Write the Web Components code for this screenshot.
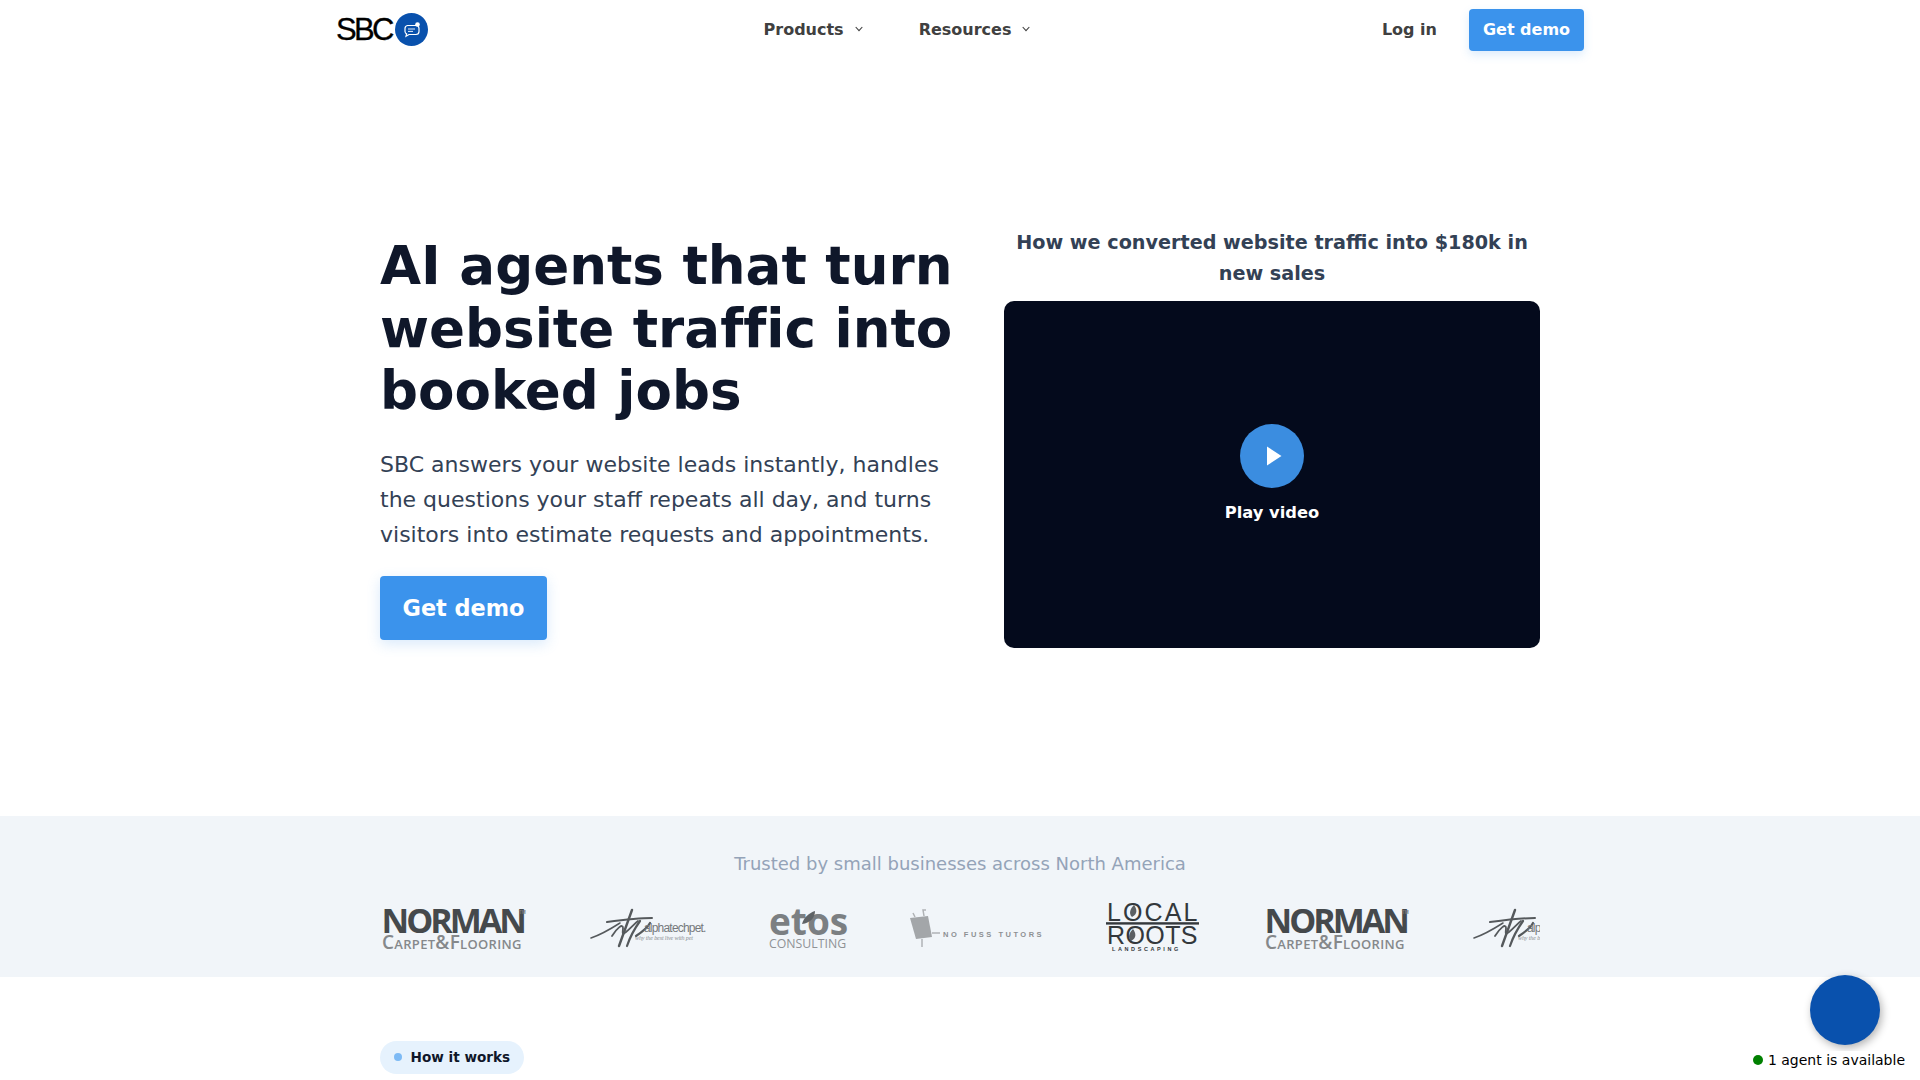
<!DOCTYPE html>
<html lang="en">
<head>
<meta charset="utf-8">
<title>SBC</title>
<style>
html, body { margin: 0; background: #fff; }
body { font-family: "DejaVu Sans", sans-serif; color: #0f172a; height: 1080px; overflow: hidden; }
</style>
</head>
<body>
<site-header></site-header>
<hero-section></hero-section>
<logo-band></logo-band>
<how-section></how-section>
<chat-widget></chat-widget>

<script>
class SiteHeader extends HTMLElement {
    constructor() {
        super();
        this.attachShadow({ mode: "open" }).innerHTML = `
<style>
:host { display: block; }
.bar { width: 1248px; height: 60px; margin: 0 auto; display: grid; grid-template-columns: 1fr auto 1fr; align-items: center; }
.logo { display: flex; align-items: center; gap: 3px; font: 400 31px "Liberation Sans", sans-serif; letter-spacing: -2.7px; -webkit-text-stroke: .3px #000; color: #000; text-decoration: none; margin-top: -1px; }
.links { display: flex; gap: 56px; margin-right: 126px; margin-top: -2px; }
a.link { display: flex; align-items: center; gap: 11px; font-size: 16px; font-weight: 700; color: #404040; text-decoration: none; }
.right { display: flex; justify-content: flex-end; align-items: center; gap: 32px; }
.right a.link { margin-top: -2px; }
.demo { width: 115px; height: 42px; padding-bottom: 2px; box-sizing: border-box; display: flex; align-items: center; justify-content: center; background: #3b93ec; color: #fff; border-radius: 4px; font-size: 16px; font-weight: 700; text-decoration: none; box-shadow: 0 4px 10px rgba(59,147,236,.18); }
</style>
<div class="bar">
  <a class="logo">SBC
    <svg width="33" height="33" viewBox="0 0 33 33">
      <circle cx="16.5" cy="16.5" r="16.5" fill="#0951ad"/>
      <path d="M12.5 12.5h8.5a3 3 0 0 1 3 3v3a3 3 0 0 1-3 3h-7l-3 1.8.6-2.4a3 3 0 0 1-1.6-2.4v-3a3 3 0 0 1 2.5-3z" fill="none" stroke="#fff" stroke-width="1.2"/>
      <path d="M13 16h7M13 18.4h5" stroke="#fff" stroke-width=".9"/>
      <circle cx="22.5" cy="11.5" r="2.3" fill="#fff"/>
    </svg>
  </a>
  <nav class="links">
    <a class="link">Products <svg width="8" height="6" viewBox="0 0 8 6"><path d="M.7 1 4 4.6 7.3 1" fill="none" stroke="#404040" stroke-width="1.1"/></svg></a>
    <a class="link">Resources <svg width="8" height="6" viewBox="0 0 8 6"><path d="M.7 1 4 4.6 7.3 1" fill="none" stroke="#404040" stroke-width="1.1"/></svg></a>
  </nav>
  <div class="right"><a class="link">Log in</a><a class="demo">Get demo</a></div>
</div>`;
    }
}

class HeroSection extends HTMLElement {
    constructor() {
        super();
        this.attachShadow({ mode: "open" }).innerHTML = `
<style>
:host { display: block; }
.wrap { width: 1160px; height: 756px; margin: 0 auto; display: grid; grid-template-columns: 1fr 536px; column-gap: 48px; align-items: center; }
h1 { margin: -1px 0 24px; font-size: 53.1px; line-height: 62.4px; font-weight: 700; font-variant-ligatures: none; color: #0f172a; }
p { margin: 0 0 24px; font-size: 22px; line-height: 35px; color: #334155; }
.cta { display: inline-flex; align-items: center; height: 64px; padding: 0 22.5px; background: #3b93ec; color: #fff; border-radius: 4px; font-size: 22.4px; font-weight: 700; box-shadow: 0 4px 14px rgba(59,147,236,.2); }
.side { margin-bottom: 2px; }
h2 { margin: 0 0 12px; font-size: 19.2px; line-height: 31px; font-weight: 700; color: #334155; text-align: center; }
.video { height: 347px; box-sizing: border-box; padding-bottom: 2px; border-radius: 10px; background: #040a1c; display: flex; flex-direction: column; align-items: center; justify-content: center; gap: 15px; color: #fff; font-size: 16.3px; font-weight: 700; }
.play { width: 64px; height: 64px; border-radius: 50%; background: #3b8de0; display: flex; align-items: center; justify-content: center; }
.play svg { margin-left: 3px; }
</style>
<div class="wrap">
  <div>
    <h1>AI agents that turn website traffic into booked jobs</h1>
    <p>SBC answers your website leads instantly, handles the questions your staff repeats all day, and turns visitors into estimate requests and appointments.</p>
    <a class="cta">Get demo</a>
  </div>
  <div class="side">
    <h2>How we converted website traffic into $180k in new sales</h2>
    <div class="video">
      <span class="play"><svg width="16" height="20" viewBox="0 0 16 20"><path d="M1 0.5 15.5 10 1 19.5z" fill="#fff"/></svg></span>
      <span>Play video</span>
    </div>
  </div>
</div>`;
    }
}

class LogoBand extends HTMLElement {
    constructor() {
        super();
        this.attachShadow({ mode: "open" }).innerHTML = `
<style>
:host { display: block; background: #f1f5f9; height: 161px; }
.wrap { width: 1160px; margin: 0 auto; padding-top: 37px; }
.title { text-align: center; font-size: 18px; line-height: 22px; color: #94a3b8; }
.strip { display: flex; gap: 64px; overflow: hidden; margin-top: 13px; padding: 12px 0 8px; align-items: flex-start; }
.strip ::slotted(*) { flex: none; }
</style>
<div class="wrap">
  <div class="title">Trusted by small businesses across North America</div>
  <div class="strip"><slot></slot></div>
</div>`;
        this.innerHTML = `
<brand-norman></brand-norman><brand-atp></brand-atp><brand-etos></brand-etos><brand-fuss></brand-fuss><brand-roots></brand-roots><brand-norman></brand-norman><brand-atp></brand-atp>`;
    }
}

// the logos are plain svg with real <text>, no outlines for letters
class BrandNorman extends HTMLElement {
    constructor() {
        super();
        this.attachShadow({ mode: "open" }).innerHTML = `
<style>:host { display: block; width: 146px; height: 56px; } svg { display: block; overflow: visible; }</style>
<svg width="146" height="56" viewBox="0 0 146 56" font-family="Open Sans, sans-serif">
  <text x="1.5" y="33" font-size="34" font-weight="700" letter-spacing="-3" fill="#45494c">NORMAN</text>
  <text x="139" y="14" font-size="4.5" font-weight="700" fill="#777">TM</text>
  <text x="2" y="49" font-size="19" font-weight="600" letter-spacing=".3" fill="#85888b" style="font-variant: small-caps">Carpet&amp;Flooring</text>
</svg>`;
    }
}

class BrandAtp extends HTMLElement {
    constructor() {
        super();
        this.attachShadow({ mode: "open" }).innerHTML = `
<style>:host { display: block; width: 115px; height: 56px; } svg { display: block; overflow: visible; }</style>
<svg width="115" height="56" viewBox="0 0 115 56">
  <g fill="none" stroke="#55595c" stroke-linecap="round">
    <path d="M1 38C10 35 19 30 30 23" stroke-width="1.5"/>
    <path d="M17 22C32 20 48 18 62 18" stroke-width="2"/>
    <path d="M42 10 29 46" stroke-width="2.4"/>
    <path d="M22 36C27 28 33 23 33 28S31 36 36 32 44 24 48 21" stroke-width="1.8"/>
    <path d="M37 46C40 37 45 28 50 21M46 36C52 32 58 27 60 23" stroke-width="2.2"/>
  </g>
  <text x="54" y="32" font-family="Liberation Sans, sans-serif" font-size="12" letter-spacing="-.8" fill="#75797c">alphatechpet.</text>
  <text x="45" y="40" font-family="Liberation Serif, serif" font-style="italic" font-size="6" letter-spacing="-.1" fill="#8a8d90">why the best live with pet</text>
</svg>`;
    }
}

class BrandEtos extends HTMLElement {
    constructor() {
        super();
        this.attachShadow({ mode: "open" }).innerHTML = `
<style>:host { display: block; width: 77px; height: 56px; } svg { display: block; overflow: visible; }</style>
<svg width="77" height="56" viewBox="0 0 77 56" font-family="Open Sans, sans-serif">
  <text x="0" y="35" font-size="37" font-weight="700" fill="#7b7f82">etos</text>
  <path d="M33 24C35 17 40 13 46 11 46 18 41 23 33 24z" fill="#5f6366"/>
  <text x="0" y="48" font-size="12.3" fill="#8f9295">CONSULTING</text>
</svg>`;
    }
}

class BrandFuss extends HTMLElement {
    constructor() {
        super();
        this.attachShadow({ mode: "open" }).innerHTML = `
<style>:host { display: block; width: 133px; height: 56px; } svg { display: block; overflow: visible; }</style>
<svg width="133" height="56" viewBox="0 0 133 56">
  <path d="M0 18 18 16 22 37 6 39z" fill="#a3a6a9"/>
  <path d="M5 17 3 13M14 16 13 10 16 10M12 39 12 47M22 33H30" stroke="#b0b3b6" stroke-width="1.5" fill="none"/>
  <text x="33" y="37" font-family="Liberation Sans, sans-serif" font-size="7.5" font-weight="700" letter-spacing="2.5" fill="#8d9093">NO FUSS TUTORS</text>
</svg>`;
    }
}

class BrandRoots extends HTMLElement {
    constructor() {
        super();
        this.attachShadow({ mode: "open" }).innerHTML = `
<style>:host { display: block; width: 92px; height: 56px; } svg { display: block; overflow: visible; }</style>
<svg width="94" height="56" viewBox="0 0 94 56" font-family="Liberation Sans, sans-serif">
  <text x="0" y="21" font-size="25" letter-spacing="2.1" fill="#33383c">LOCAL</text>
  <rect x="-1" y="22.2" width="93" height="2.4" fill="#33383c"/>
  <text x="0" y="44" font-size="25" letter-spacing=".4" fill="#33383c">ROOTS</text>
  <path d="M25 17C21 13 24 8 27 5 30 9 31 14 25 17zM24 41C20 37 23 32 26 29 29 33 30 38 24 41z" fill="#5b6064"/>
  <text x="5" y="51" font-size="5.5" font-weight="700" letter-spacing="2.6" fill="#33383c">LANDSCAPING</text>
</svg>`;
    }
}

class HowSection extends HTMLElement {
    constructor() {
        super();
        this.attachShadow({ mode: "open" }).innerHTML = `
<style>
:host { display: block; width: 1160px; margin: 64px auto 0; }
.pill { display: inline-flex; align-items: center; gap: 9px; height: 33px; padding: 0 13.5px 2px 13.5px; box-sizing: border-box; background: #e6f2fd; border-radius: 17px; font-size: 13.6px; font-weight: 700; color: #0f172a; }
.dot { width: 8px; height: 8px; border-radius: 50%; background: #7dbaf5; }
</style>
<span class="pill"><span class="dot"></span>How it works</span>`;
    }
}

class ChatWidget extends HTMLElement {
    constructor() {
        super();
        this.attachShadow({ mode: "open" }).innerHTML = `
<style>
:host { position: fixed; right: 15px; bottom: 11px; display: flex; flex-direction: column; align-items: flex-end; gap: 6px; }
.bubble { width: 70px; height: 70px; margin-right: 25px; border-radius: 50%; background: #0951ad; box-shadow: 2px 3px 8px rgba(0,0,0,.3); }
.status { display: flex; align-items: center; gap: 5px; font-size: 14px; line-height: 18px; color: #000; background: #fff; }
.on { width: 10px; height: 10px; border-radius: 50%; background: #008000; }
</style>
<div class="bubble"></div>
<div class="status"><span class="on"></span>1 agent is available</div>`;
    }
}

customElements.define("site-header", SiteHeader);
customElements.define("hero-section", HeroSection);
customElements.define("logo-band", LogoBand);
customElements.define("brand-norman", BrandNorman);
customElements.define("brand-atp", BrandAtp);
customElements.define("brand-etos", BrandEtos);
customElements.define("brand-fuss", BrandFuss);
customElements.define("brand-roots", BrandRoots);
customElements.define("how-section", HowSection);
customElements.define("chat-widget", ChatWidget);
</script>
</body>
</html>
